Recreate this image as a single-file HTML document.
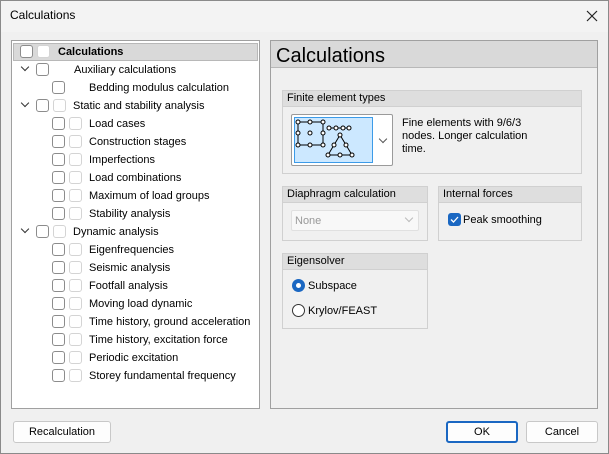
<!DOCTYPE html><html><head><style>
*{box-sizing:border-box;margin:0;padding:0}
body{width:609px;height:454px;background:#f0f0f0;font-family:"Liberation Sans",sans-serif;font-size:11px;color:#000;position:relative;overflow:hidden;box-shadow:inset 0 0 0 1px #8a8a8a}
.a{position:absolute}
.cb{position:absolute;width:13px;height:13px;border:1px solid #8c8c8c;border-radius:3px;background:#fff}
.cb.l{border-color:#d4d4d4}
.t{position:absolute;white-space:nowrap;line-height:13px}
.grp{position:absolute;border:1px solid #d0d0d0;background:#f0f0f0}
.gh{background:#dedede;height:16px;line-height:15px;padding-left:4px;border-bottom:1px solid #d0d0d0}
.btn{position:absolute;height:22px;border:1px solid #c8c8c8;background:#fdfdfd;border-radius:3px;text-align:center;line-height:20px}
.chev{position:absolute;width:6px;height:6px;border-right:1.3px solid #333;border-bottom:1.3px solid #333;transform:rotate(45deg)}
</style></head><body>
<div class="a" style="left:1px;top:1px;width:607px;height:31px;background:#f3f3f3"></div>
<div class="t" style="left:10px;top:9px;font-size:12px">Calculations</div>
<svg class="a" style="left:586px;top:10px" width="12" height="12"><path d="M1 1L11 11M11 1L1 11" stroke="#222" stroke-width="1.2"/></svg>

<div class="a" style="left:11px;top:40px;width:249px;height:369px;background:#fff;border:1px solid #a0a0a0"></div>
<div class="a" style="left:13px;top:43px;width:245px;height:18px;background:#d9d9d9;border:1px solid #b8b8b8"></div>
<div class="cb" style="left:20px;top:45px"></div><div class="cb l" style="left:37px;top:45px"></div>
<div class="t" style="left:58px;top:46px;font-weight:bold">Calculations</div>

<div class="chev" style="left:22px;top:64px"></div><div class="cb" style="left:36px;top:63px"></div>
<div class="t" style="left:74px;top:64px">Auxiliary calculations</div>
<div class="cb" style="left:52px;top:81px"></div>
<div class="t" style="left:89px;top:82px">Bedding modulus calculation</div>
<div class="chev" style="left:22px;top:100px"></div><div class="cb" style="left:36px;top:99px"></div><div class="cb l" style="left:53px;top:99px"></div>
<div class="t" style="left:73px;top:100px">Static and stability analysis</div>
<div class="chev" style="left:22px;top:226px"></div><div class="cb" style="left:36px;top:225px"></div><div class="cb l" style="left:53px;top:225px"></div>
<div class="t" style="left:73px;top:226px">Dynamic analysis</div>

<div class="cb" style="left:52px;top:117px"></div><div class="cb l" style="left:69px;top:117px"></div><div class="t" style="left:89px;top:118px">Load cases</div>
<div class="cb" style="left:52px;top:135px"></div><div class="cb l" style="left:69px;top:135px"></div><div class="t" style="left:89px;top:136px">Construction stages</div>
<div class="cb" style="left:52px;top:153px"></div><div class="cb l" style="left:69px;top:153px"></div><div class="t" style="left:89px;top:154px">Imperfections</div>
<div class="cb" style="left:52px;top:171px"></div><div class="cb l" style="left:69px;top:171px"></div><div class="t" style="left:89px;top:172px">Load combinations</div>
<div class="cb" style="left:52px;top:189px"></div><div class="cb l" style="left:69px;top:189px"></div><div class="t" style="left:89px;top:190px">Maximum of load groups</div>
<div class="cb" style="left:52px;top:207px"></div><div class="cb l" style="left:69px;top:207px"></div><div class="t" style="left:89px;top:208px">Stability analysis</div>
<div class="cb" style="left:52px;top:243px"></div><div class="cb l" style="left:69px;top:243px"></div><div class="t" style="left:89px;top:244px">Eigenfrequencies</div>
<div class="cb" style="left:52px;top:261px"></div><div class="cb l" style="left:69px;top:261px"></div><div class="t" style="left:89px;top:262px">Seismic analysis</div>
<div class="cb" style="left:52px;top:279px"></div><div class="cb l" style="left:69px;top:279px"></div><div class="t" style="left:89px;top:280px">Footfall analysis</div>
<div class="cb" style="left:52px;top:297px"></div><div class="cb l" style="left:69px;top:297px"></div><div class="t" style="left:89px;top:298px">Moving load dynamic</div>
<div class="cb" style="left:52px;top:315px"></div><div class="cb l" style="left:69px;top:315px"></div><div class="t" style="left:89px;top:316px">Time history, ground acceleration</div>
<div class="cb" style="left:52px;top:333px"></div><div class="cb l" style="left:69px;top:333px"></div><div class="t" style="left:89px;top:334px">Time history, excitation force</div>
<div class="cb" style="left:52px;top:351px"></div><div class="cb l" style="left:69px;top:351px"></div><div class="t" style="left:89px;top:352px">Periodic excitation</div>
<div class="cb" style="left:52px;top:369px"></div><div class="cb l" style="left:69px;top:369px"></div><div class="t" style="left:89px;top:370px">Storey fundamental frequency</div>

<div class="a" style="left:270px;top:40px;width:328px;height:369px;border:1px solid #a0a0a0;background:#f0f0f0"></div>
<div class="a" style="left:271px;top:41px;width:326px;height:27px;background:#d9d9d9;border-bottom:1px solid #b8b8b8"></div>
<div class="t" style="left:276px;top:45px;font-size:20px;line-height:22px">Calculations</div>

<div class="grp" style="left:282px;top:90px;width:300px;height:84px"><div class="gh">Finite element types</div></div>
<div class="a" style="left:291px;top:114px;width:102px;height:52px;background:#fff;border:1px solid #9a9a9a;border-radius:2px"></div>
<div class="a" style="left:294px;top:117px;width:79px;height:46px;background:#cce8ff;border:1px solid #3c9be8"></div>
<svg class="a" style="left:294px;top:117px" width="80" height="46" fill="#fff" stroke="#000" stroke-width="1">
<rect x="4" y="5" width="25" height="23" fill="none"/>
<circle cx="4" cy="5" r="2"/><circle cx="16" cy="5" r="2"/><circle cx="29" cy="5" r="2"/>
<circle cx="4" cy="16" r="2"/><circle cx="16" cy="16" r="2"/><circle cx="29" cy="16" r="2"/>
<circle cx="4" cy="28" r="2"/><circle cx="16" cy="28" r="2"/><circle cx="29" cy="28" r="2"/>
<path d="M35 11H55" /><circle cx="35" cy="11" r="2"/><circle cx="42" cy="11" r="2"/><circle cx="49" cy="11" r="2"/><circle cx="55" cy="11" r="2"/>
<path d="M46 18L34 38H58Z" fill="none"/>
<circle cx="46" cy="18" r="2"/><circle cx="40" cy="28" r="2"/><circle cx="52" cy="28" r="2"/><circle cx="34" cy="38" r="2"/><circle cx="46" cy="38" r="2"/><circle cx="58" cy="38" r="2"/>
</svg>
<div class="chev" style="left:380px;top:136px;border-color:#555;border-width:0 1px 1px 0"></div>
<div class="t" style="left:402px;top:117px;line-height:13px">Fine elements with 9/6/3<br>nodes. Longer calculation<br>time.</div>

<div class="grp" style="left:282px;top:186px;width:146px;height:55px"><div class="gh">Diaphragm calculation</div></div>
<div class="a" style="left:291px;top:210px;width:128px;height:21px;background:#f8f8f8;border:1px solid #e0e0e0;border-radius:2px"></div>
<div class="t" style="left:295px;top:215px;color:#999">None</div>
<div class="chev" style="left:406px;top:215px;border-color:#bbb;border-width:0 1px 1px 0"></div>

<div class="grp" style="left:438px;top:186px;width:144px;height:55px"><div class="gh">Internal forces</div></div>
<div class="a" style="left:448px;top:213px;width:13px;height:13px;background:#1a67c2;border-radius:3px"></div>
<svg class="a" style="left:448px;top:213px" width="13" height="13"><path d="M3 6.5L5.5 9L10 4" stroke="#fff" stroke-width="1.3" fill="none"/></svg>
<div class="t" style="left:463px;top:214px">Peak smoothing</div>

<div class="grp" style="left:282px;top:253px;width:146px;height:76px"><div class="gh">Eigensolver</div></div>
<div class="a" style="left:292px;top:279px;width:13px;height:13px;border-radius:50%;background:#1a67c2"></div>
<div class="a" style="left:296px;top:283px;width:5px;height:5px;border-radius:50%;background:#fff"></div>
<div class="t" style="left:308px;top:280px">Subspace</div>
<div class="a" style="left:292px;top:304px;width:13px;height:13px;border-radius:50%;border:1px solid #333;background:#fff"></div>
<div class="t" style="left:308px;top:305px">Krylov/FEAST</div>

<div class="btn" style="left:13px;top:421px;width:98px">Recalculation</div>
<div class="btn" style="left:446px;top:421px;width:72px;border:2px solid #1a67c2;line-height:18px">OK</div>
<div class="btn" style="left:526px;top:421px;width:72px">Cancel</div>
</body></html>
